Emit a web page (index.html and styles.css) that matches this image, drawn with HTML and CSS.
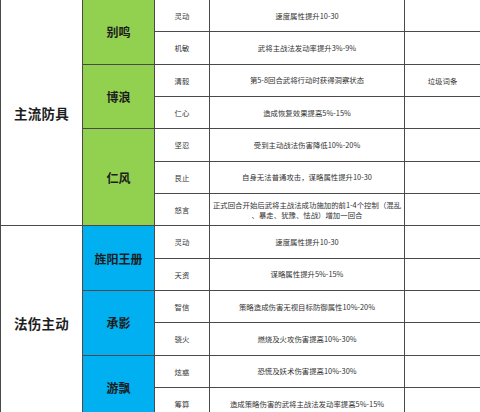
FILE: index.html
```html
<!DOCTYPE html>
<html lang="zh">
<head>
<meta charset="utf-8">
<link rel="stylesheet" href="styles.css">
</head>
<body>
<div class="sheet">
  <div class="cat s7">主流防具</div>
  <div class="gear green s2">别鸣</div>
  <div class="attr">灵动</div><div class="desc">速度属性提升10-30</div><div class="note"></div>
  <div class="attr">机敏</div><div class="desc">武将主战法发动率提升3%-9%</div><div class="note"></div>
  <div class="gear green s2">博浪</div>
  <div class="attr">清毅</div><div class="desc">第5-8回合武将行动时获得洞察状态</div><div class="note">垃圾词条</div>
  <div class="attr">仁心</div><div class="desc">造成恢复效果提高5%-15%</div><div class="note"></div>
  <div class="gear green s3">仁风</div>
  <div class="attr">坚忍</div><div class="desc">受到主动战法伤害降低10%-20%</div><div class="note"></div>
  <div class="attr">艮止</div><div class="desc">自身无法普通攻击，谋略属性提升10-30</div><div class="note"></div>
  <div class="attr">怒言</div><div class="desc two">正式回合开始后武将主战法成功施加的前1-4个控制（混乱<br>、暴走、犹豫、怯战）增加一回合</div><div class="note"></div>
  <div class="cat s6">法伤主动</div>
  <div class="gear blue s2">旌阳王册</div>
  <div class="attr">灵动</div><div class="desc">速度属性提升10-30</div><div class="note"></div>
  <div class="attr">天资</div><div class="desc">谋略属性提升5%-15%</div><div class="note"></div>
  <div class="gear blue s2">承影</div>
  <div class="attr">智信</div><div class="desc">策略造成伤害无视目标防御属性10%-20%</div><div class="note"></div>
  <div class="attr">骁火</div><div class="desc">燃烧及火攻伤害提高10%-30%</div><div class="note"></div>
  <div class="gear blue s2">游飘</div>
  <div class="attr">炫惑</div><div class="desc">恐慌及妖术伤害提高10%-30%</div><div class="note"></div>
  <div class="attr">筹算</div><div class="desc">造成策略伤害的武将主战法发动率提高5%-15%</div><div class="note"></div>
</div>
</body>
</html>
```
FILE: styles.css
```css
html, body {
  margin: 0;
  padding: 0;
  background: #ffffff;
  overflow: hidden;
  width: 480px;
  height: 412px;
}

.sheet {
  display: grid;
  grid-template-columns: 82px 72px 55px 195px 75px;
  grid-template-rows: repeat(13, 32.33px);
  border-left: 1px solid #4a4a4a;
  width: 479px;
  height: 412px;
  overflow: hidden;
  font-family: "Noto Sans CJK SC", sans-serif;
  color: #2a2a2a;
}

.sheet > div {
  border-right: 1px solid #4a4a4a;
  border-bottom: 1px solid #4a4a4a;
  display: flex;
  align-items: center;
  justify-content: center;
  text-align: center;
  box-sizing: border-box;
}

.cat {
  grid-column: 1;
  font-size: 13.5px;
  font-weight: 700;
  color: #1e1e1e;
  letter-spacing: 0.2px;
}

.gear {
  grid-column: 2;
  font-size: 12px;
  font-weight: 700;
  color: #1c1c1c;
}

.green { background: #92d050; }
.blue { background: #00b0f0; }

.s2 { grid-row: span 2; }
.s3 { grid-row: span 3; }
.s6 { grid-row: span 6; }
.s7 { grid-row: span 7; }

.attr {
  grid-column: 3;
  font-size: 7.4px;
  color: #333333;
}

.desc {
  grid-column: 4;
  font-size: 7.4px;
  color: #333333;
  line-height: 10px;
}

.sheet > .note {
  grid-column: 5;
  font-size: 7.4px;
  color: #333333;
  border-right: none;
}
```
